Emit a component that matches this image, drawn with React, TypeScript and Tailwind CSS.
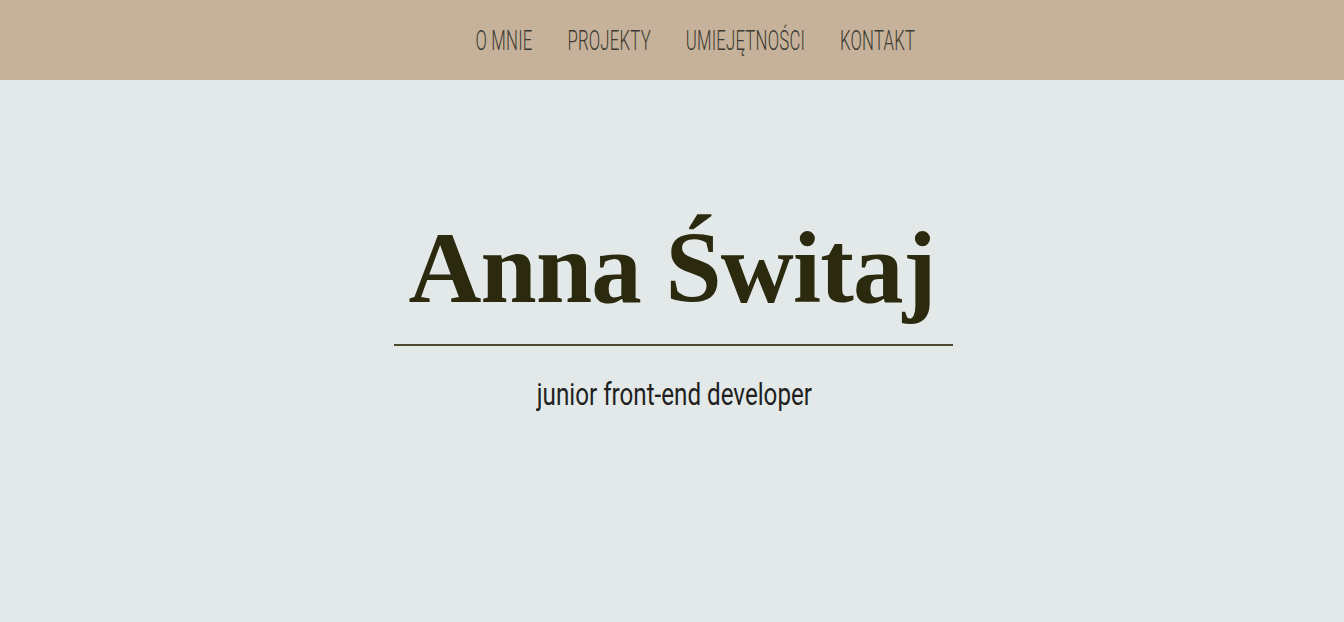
const NAV = ['O MNIE', 'PROJEKTY', 'UMIEJĘTNOŚCI', 'KONTAKT']

export default function App() {
  return (
    <div className="min-h-[622px] bg-[#e3e9e9]">
      <nav className="h-20 bg-[#c6b29a] flex items-center justify-center pt-[2px]">
        <ul className="flex gap-[58px] ml-[46px] scale-x-[0.6] font-['Roboto',sans-serif] text-[28px] leading-[32px] tracking-[0.3px] text-[#3d3a33] font-light">
          {NAV.map(item => (
            <li key={item}>
              <a href="#">{item}</a>
            </li>
          ))}
        </ul>
      </nav>

      <header className="flex flex-col items-center pt-[128px]">
        <h1 className="font-['Liberation_Serif',serif] font-bold text-[101px] leading-[120px] text-[#2b2a0e] tracking-[-0.8px]">
          Anna Świtaj
        </h1>
        <div className="w-[559px] h-[2px] bg-[#4b4a2c] mt-[16px] ml-[2px]" />
        <p className="mt-[32px] ml-[4px] scale-x-[0.78] font-['Roboto',sans-serif] text-[31px] leading-[34px] text-[#1f1f1f]">
          junior front-end developer
        </p>
      </header>
    </div>
  )
}
